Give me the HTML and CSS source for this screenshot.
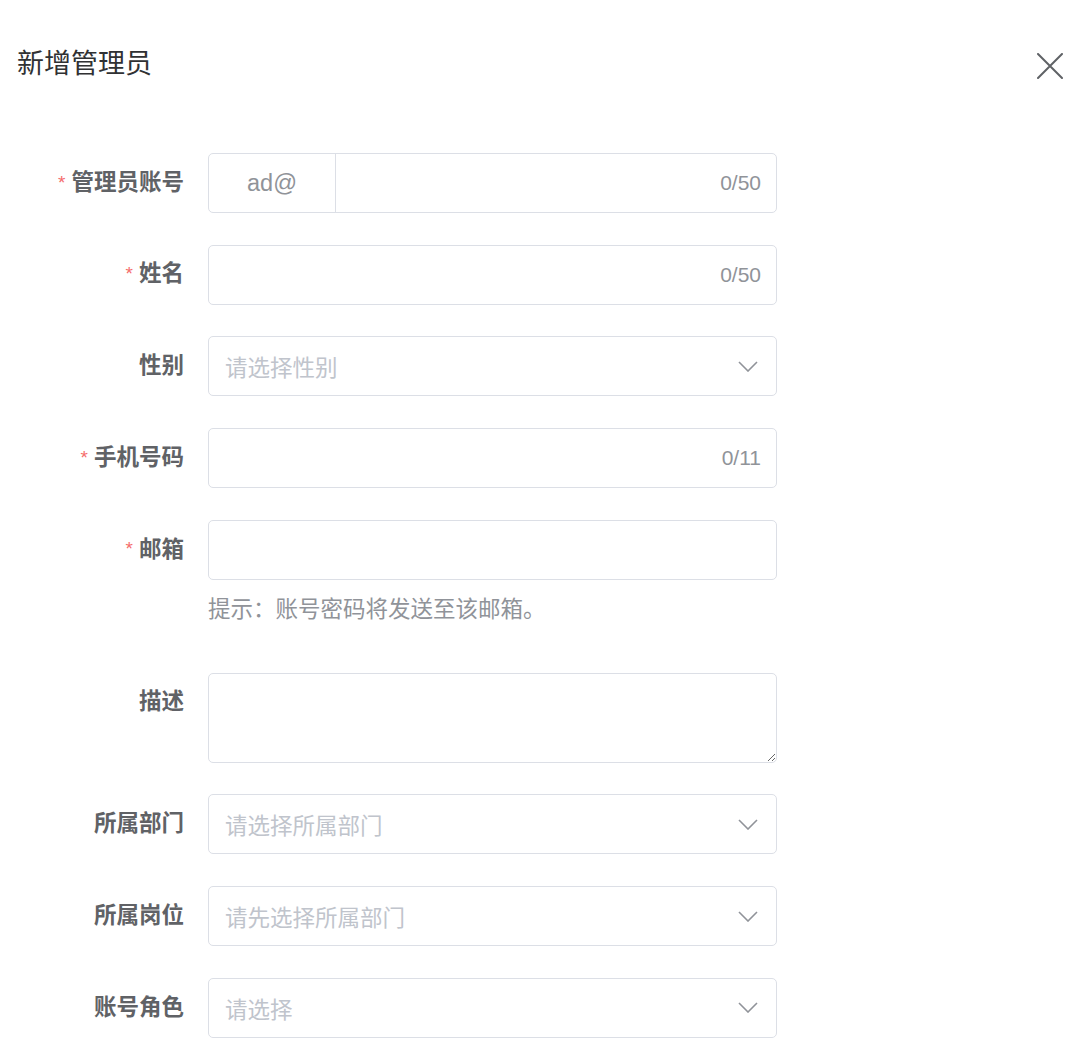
FILE: index.html
```html
<!DOCTYPE html>
<html lang="zh-CN">
<head>
<meta charset="utf-8">
<title>新增管理员</title>
<link rel="stylesheet" href="styles.css">
</head>
<body>
<div class="dialog">
  <div class="header">
    <span class="title">新增管理员</span>
    <span class="close">
      <svg viewBox="0 0 26 26" width="26" height="26"><path d="M1 1 L25 25 M25 1 L1 25" stroke="#5f6266" stroke-width="2" fill="none" stroke-linecap="round"/></svg>
    </span>
  </div>
  <div class="form">
    <div class="row">
      <div class="label"><span class="req">*</span>管理员账号</div>
      <div class="field">
        <div class="box group">
          <div class="prepend">ad@</div>
          <div class="inner"><span class="value"></span><span class="count">0/50</span></div>
        </div>
      </div>
    </div>
    <div class="row">
      <div class="label"><span class="req">*</span>姓名</div>
      <div class="field">
        <div class="box"><span class="value"></span><span class="count">0/50</span></div>
      </div>
    </div>
    <div class="row">
      <div class="label">性别</div>
      <div class="field">
        <div class="box"><span class="ph">请选择性别</span><svg class="chev" viewBox="0 0 20 11" width="20" height="11"><path d="M1 1 L10 10 L19 1" stroke="#909399" stroke-width="1.6" fill="none"/></svg></div>
      </div>
    </div>
    <div class="row">
      <div class="label"><span class="req">*</span>手机号码</div>
      <div class="field">
        <div class="box"><span class="value"></span><span class="count">0/11</span></div>
      </div>
    </div>
    <div class="row">
      <div class="label"><span class="req">*</span>邮箱</div>
      <div class="field">
        <div class="box"><span class="value"></span></div>
        <div class="hint">提示：账号密码将发送至该邮箱。</div>
      </div>
    </div>
    <div class="row">
      <div class="label">描述</div>
      <div class="field">
        <textarea class="area"></textarea>
      </div>
    </div>
    <div class="row">
      <div class="label">所属部门</div>
      <div class="field">
        <div class="box"><span class="ph">请选择所属部门</span><svg class="chev" viewBox="0 0 20 11" width="20" height="11"><path d="M1 1 L10 10 L19 1" stroke="#909399" stroke-width="1.6" fill="none"/></svg></div>
      </div>
    </div>
    <div class="row">
      <div class="label">所属岗位</div>
      <div class="field">
        <div class="box"><span class="ph">请先选择所属部门</span><svg class="chev" viewBox="0 0 20 11" width="20" height="11"><path d="M1 1 L10 10 L19 1" stroke="#909399" stroke-width="1.6" fill="none"/></svg></div>
      </div>
    </div>
    <div class="row">
      <div class="label">账号角色</div>
      <div class="field">
        <div class="box"><span class="ph">请选择</span><svg class="chev" viewBox="0 0 20 11" width="20" height="11"><path d="M1 1 L10 10 L19 1" stroke="#909399" stroke-width="1.6" fill="none"/></svg></div>
      </div>
    </div>
  </div>
</div>
</body>
</html>
```

FILE: styles.css
```css
html, body {
  margin: 0;
  padding: 0;
  background: #ffffff;
}
body {
  font-family: "Liberation Sans", "Noto Sans CJK SC", sans-serif;
  color: #606266;
}
.dialog {
  width: 1072px;
}
.header {
  display: flex;
  justify-content: space-between;
  align-items: center;
  padding: 44px 9px 0 17px;
  height: 40px;
}
.title {
  font-size: 27px;
  line-height: 40px;
  color: #303133;
}
.close {
  display: flex;
  width: 26px;
  height: 26px;
  margin-top: 4px;
}
.form {
  margin-top: 69px;
  display: flex;
  flex-direction: column;
  gap: 31.7px;
}
.row {
  display: flex;
  align-items: flex-start;
}
.label {
  box-sizing: content-box;
  width: 184px;
  height: 60px;
  padding-right: 24px;
  display: flex;
  align-items: center;
  justify-content: flex-end;
  font-size: 22.5px;
  font-weight: bold;
  line-height: 1;
  color: #606266;
  flex-shrink: 0;
}
.req {
  color: #f56c6c;
  font-weight: normal;
  font-size: 19px;
  margin-right: 6px;
  margin-top: -2px;
}
.field {
  width: 569px;
}
.box {
  box-sizing: border-box;
  height: 60px;
  border: 1px solid #dcdfe6;
  border-radius: 5px;
  display: flex;
  align-items: center;
  padding: 0 15px 0 16px;
  background: #fff;
}
.box.group {
  padding: 0;
}
.prepend {
  width: 126px;
  height: 100%;
  border-right: 1px solid #dcdfe6;
  display: flex;
  align-items: center;
  justify-content: center;
  font-size: 23.5px;
  color: #909399;
  flex-shrink: 0;
}
.inner {
  flex: 1;
  display: flex;
  align-items: center;
  padding: 0 15px 0 16px;
  height: 100%;
}
.value {
  flex: 1;
}
.count {
  font-size: 21px;
  color: #909399;
}
.ph {
  flex: 1;
  font-size: 22.5px;
  color: #c0c4cc;
}
.chev {
  margin-right: 3px;
}
.hint {
  height: 61.3px;
  padding-top: 14px;
  box-sizing: border-box;
  line-height: 32px;
  font-size: 22.5px;
  color: #909399;
}
.area {
  display: block;
  box-sizing: border-box;
  width: 569px;
  height: 90px;
  margin: 0;
  border: 1px solid #dcdfe6;
  border-radius: 5px;
  resize: vertical;
  font-family: inherit;
  font-size: 21px;
  padding: 8px 16px;
  outline: none;
}
```
